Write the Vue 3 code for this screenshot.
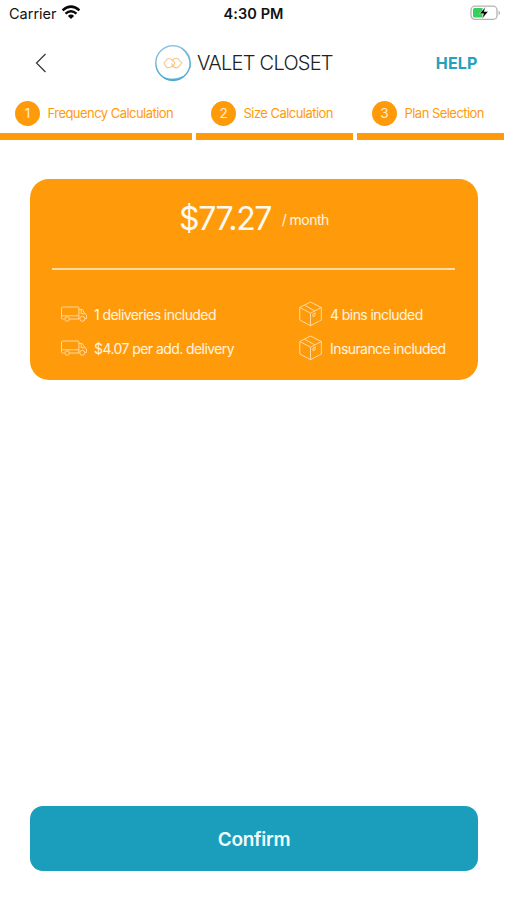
<script setup>
const steps = [
  { n: 1, label: 'Frequency Calculation' },
  { n: 2, label: 'Size Calculation' },
  { n: 3, label: 'Plan Selection' },
]
const features = [
  { icon: 'truck', text: '1 deliveries included' },
  { icon: 'box', text: '4 bins included' },
  { icon: 'truck', text: '$4.07 per add. delivery' },
  { icon: 'box', text: 'Insurance included' },
]
</script>

<template>
  <main class="screen">
    <div class="status">
      <div class="carrier">
        <span class="carrier-name">Carrier</span>
        <svg class="wifi" width="20" height="15" viewBox="0 0 20 15" fill="none" stroke="#080808">
          <path d="M1.6 5.4Q10-2.1 18.4 5.4" stroke-width="2.5" />
          <path d="M4.5 8.6Q10 4 15.5 8.6" stroke-width="2.4" />
          <path d="M6.9 10.9Q10 8.3 13.1 10.9L10 14Z" fill="#080808" stroke="none" />
        </svg>
      </div>
      <span class="time">4:30 PM</span>
      <svg class="battery" width="31" height="16" viewBox="0 0 31 16">
        <rect x="1" y="1.2" width="26" height="13.2" rx="4" fill="#fff" stroke="#b3b3b3" stroke-width="1.3" />
        <path d="M28.6 5.5Q31.5 7.8 28.6 10.2Z" fill="#aaa" />
        <path d="M4.5 3h8v9.6h-8a1.5 1.5 0 0 1-1.5-1.5v-6.6a1.5 1.5 0 0 1 1.5-1.5z" fill="#35cf5b" />
        <path d="M15.6 1.7L9.5 8.7h4l-1.5 5.2 6.2-7.3h-4.1z" fill="#000" stroke="#fff" stroke-width=".5" />
      </svg>
    </div>

    <header class="header">
      <svg class="back" width="12" height="20" viewBox="0 0 12 20" fill="none" stroke="#333" stroke-width="1.2">
        <path d="M10.5 1L1.5 10l9 9" />
      </svg>
      <div class="brand">
        <svg class="logo" width="38" height="38" viewBox="0 0 38 38" fill="none">
          <defs>
            <linearGradient id="ring" x1="0" y1="0" x2="0" y2="1">
              <stop offset="0" stop-color="#91c6df" />
              <stop offset="1" stop-color="#43a4d3" />
            </linearGradient>
          </defs>
          <circle cx="19" cy="19" r="17.2" stroke="url(#ring)" stroke-width="1.4" />
          <path d="M10 33.5Q19 39 29 32.5Q19 37 10 33.5Z" fill="#4eabd6" stroke="#4eabd6" stroke-width=".6" />
          <path d="M27 4Q38 12 36.2 24Q37 12 27 4Z" fill="#66b5da" stroke="#66b5da" stroke-width=".6" />
          <g stroke="#f8c68b" stroke-width="1.1">
            <path d="M20.5 20.5l-4.5 3h-3.5l-2.5-4.5 3.5-4.3h3.2l4.3 4.2-2.5 4.3" />
            <path d="M17.8 17l2.8-2.5h3.2l4 4.5-4 4.6h-3.3l-3-4.2" />
          </g>
        </svg>
        <span class="brand-name">VALET CLOSET</span>
      </div>
      <span class="help">HELP</span>
    </header>

    <nav class="steps">
      <div v-for="s in steps" :key="s.n" class="step">
        <span class="num">{{ s.n }}</span>
        <span class="step-label">{{ s.label }}</span>
      </div>
    </nav>

    <section class="card">
      <div class="price">
        <span class="amount">$77.27</span>
        <span class="per">/ month</span>
      </div>
      <div class="rule"></div>
      <div class="features">
        <div v-for="f in features" :key="f.text" class="feature">
          <svg v-if="f.icon === 'truck'" class="truck" width="26" height="16" viewBox="0 0 26 16" fill="none" stroke="#ffdca6" stroke-width=".95">
            <path d="M3.5 13H1.5a1 1 0 0 1-1-1V2a1 1 0 0 1 1-1h15.400a1 1 0 0 1 1 1v11H8.700M.5 9.800h17.400M17.900 3.500h3.300l2.700 4.200 1.600 1.300v3.500h-1.500M20.200 3.700v4h3.700" />
            <circle cx="6.1" cy="13" r="2.2" />
            <circle cx="21.3" cy="12.8" r="2.5" />
          </svg>
          <svg v-else class="box" width="24" height="26" viewBox="0 0 24 26" fill="none" stroke="#ffdca6" stroke-width=".95" stroke-linejoin="round">
            <path d="M11.5 1l10.800 5.500v12.500L11.500 24.700 .8 19V6.500zM.8 6.500L11.500 12.200l10.800-5.700M11.500 12.200v12.500M5.500 4.200l10.300 5.700M14 15.700v-2.600l2.200-1.200v2.600z" />
          </svg>
          <span class="feature-text">{{ f.text }}</span>
        </div>
      </div>
    </section>

    <button class="confirm"><span>Confirm</span></button>
  </main>
</template>

<style>
body { background: #fff; }
</style>

<style scoped>
.screen {
  box-sizing: border-box;
  width: 507px;
  height: 900px;
  display: flex;
  flex-direction: column;
  background: #fff;
  font-family: Inter, "Liberation Sans", sans-serif;
  white-space: nowrap;
  overflow: hidden;
}
.status {
  height: 28px;
  flex: none;
  display: grid;
  grid-template-columns: 1fr auto 1fr;
  align-items: center;
  padding: 0 6px 0 9px;
  box-sizing: border-box;
  color: #111;
}
.carrier { display: flex; align-items: center; gap: 5px; }
.carrier-name { font-size: 14.5px; line-height: 18px; }
.wifi { margin: -3px 0 0 -1px; }
.time { font-size: 14.5px; line-height: 18px; font-weight: 600; letter-spacing: .1px; margin-right: 3px; }
.battery { justify-self: end; margin-top: -2px; }
.header {
  height: 70px;
  flex: none;
  display: flex;
  align-items: center;
  padding: 0 29.5px 0 35px;
}
.brand { display: flex; align-items: center; gap: 5px; margin-left: 107px; }
.brand-name { font-size: 20px; font-weight: 300; letter-spacing: -.75px; color: #222; }
.help { margin-left: auto; font-size: 16px; font-weight: 700; letter-spacing: .15px; color: #25a1bd; }
.steps {
  display: grid;
  grid-template-columns: 192px 157px 147px;
  column-gap: 4px;
  height: 42px;
  flex: none;
  color: #ff9b0b;
}
.step {
  display: flex;
  align-items: flex-start;
  gap: 7.5px;
  box-sizing: border-box;
  padding-top: 3px;
  padding-left: 15px;
  border-bottom: 7px solid #ff9b0b;
}
.num {
  width: 25px;
  height: 25px;
  border-radius: 50%;
  background: #ff9b0b;
  color: #ffeccb;
  font-size: 13.5px;
  line-height: 25px;
  text-align: center;
}
.step-label { font-size: 13px; line-height: 25px; letter-spacing: -.54px; }
.card {
  box-sizing: border-box;
  width: 448px;
  height: 201px;
  flex: none;
  margin: 39px 0 0 30px;
  border-radius: 19px;
  background: #ff9b0b;
  color: #fff5e2;
  padding: 19px 22px 0;
}
.price { display: flex; align-items: center; height: 40px; padding-left: 127px; gap: 10.5px; }
.amount { font-size: 32px; font-weight: 400; letter-spacing: -1.35px; color: #fffaf0; }
.per { font-size: 14px; letter-spacing: -.5px; margin-top: 2px; }
.rule { height: 2px; margin-top: 30px; width: 403px; background: #ffdca6; }
.features {
  display: grid;
  grid-template-columns: 238px 1fr;
  grid-auto-rows: 34px;
  margin: 27px -10px 0 9px;
}
.feature { display: flex; align-items: center; }
.feature-text { font-size: 14px; letter-spacing: -.57px; }
.truck { margin-right: 7px; }
.box { margin-right: 7px; }
.confirm {
  width: 448px;
  height: 65px;
  flex: none;
  margin: auto 0 29px 30px;
  border: 0;
  padding: 1px 0 0;
  border-radius: 13px;
  background: #1a9ebc;
  color: #f1fcff;
  font: 600 19px Inter, "Liberation Sans", sans-serif;
  letter-spacing: -.3px;
}
</style>
